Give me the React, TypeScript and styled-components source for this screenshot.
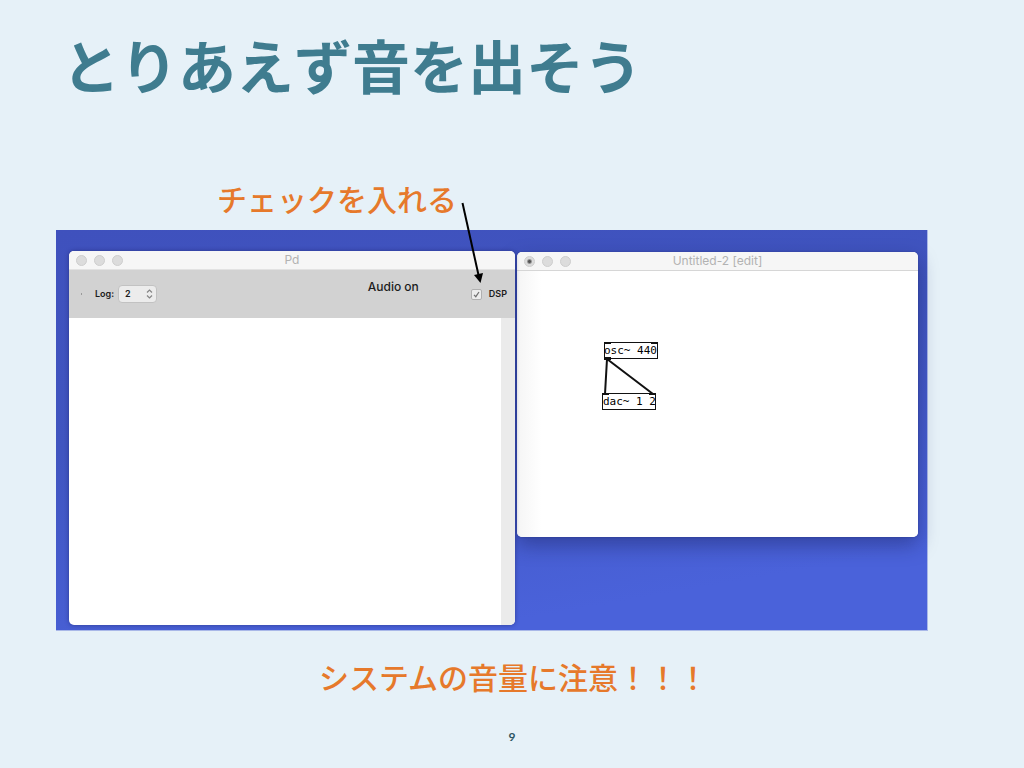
import React from "react";
import styled, { createGlobalStyle } from "styled-components";

const GlobalStyle = createGlobalStyle`
  * { box-sizing: border-box; }
  body {
    margin: 0;
    background: #e6f1f8;
    font-family: "Noto Sans CJK JP", "Noto Sans", sans-serif;
  }
`;

const Slide = styled.main`
  min-height: 100vh;
  display: flex;
  flex-direction: column;
  padding: 28px 96px 21px 56px;
`;

const Title = styled.h1`
  margin: 0 0 80px;
  padding-left: 6px;
  font-size: 58px;
  line-height: 72px;
  font-weight: 700;
  color: #3f7c8f;
`;

const Note = styled.p<{ $indent: number }>`
  margin: 0;
  padding-left: ${(p) => p.$indent}px;
  font-size: 30px;
  line-height: 36px;
  font-weight: 500;
  color: #e6792b;
`;

const Desktop = styled.section`
  margin: 14px 0 27px;
  height: 401px;
  padding: 21px 10px 5px 13px;
  display: grid;
  grid-template-columns: 446fr 401fr;
  gap: 2px;
  align-items: start;
  background: linear-gradient(170deg, #3f51bd 0%, #4055c0 40%, #4a62da 85%);
  box-shadow: inset -1px -1px 0 #a9b8e8;
`;

const Window = styled.article<{ $height: number; $front?: boolean }>`
  position: relative;
  z-index: ${(p) => (p.$front ? 1 : 0)};
  height: ${(p) => p.$height}px;
  margin-top: ${(p) => (p.$front ? 0 : 1)}px;
  display: flex;
  flex-direction: column;
  background: #fff;
  border-radius: 5px;
  box-shadow: ${(p) =>
    p.$front
      ? "0 0 4px rgba(20, 25, 90, 0.5)"
      : "0 0 2px rgba(30, 40, 110, 0.5), 0 8px 20px rgba(20, 25, 80, 0.4)"};
  font-family: Inter, sans-serif;
`;

const TitleBar = styled.header<{ $line: string }>`
  height: 19px;
  flex: none;
  display: grid;
  grid-template-columns: 60px 1fr 60px;
  align-items: center;
  background: #f6f6f6;
  border-bottom: 1px solid ${(p) => p.$line};
  border-radius: 5px 5px 0 0;
`;

const Lights = styled.div`
  display: flex;
  gap: 7px;
  padding-left: 7px;
`;

const Light = styled.button<{ $dot?: boolean }>`
  width: 11px;
  height: 11px;
  padding: 0;
  border: 1px solid #cecece;
  border-radius: 50%;
  background: ${(p) =>
    p.$dot ? "radial-gradient(circle, #555 0 1px, #dcdcdc 3px)" : "#dcdcdc"};
`;

const WindowName = styled.h2`
  margin: 0;
  text-align: center;
  font-size: 12px;
  line-height: 18px;
  font-weight: 400;
  color: #b2b2b2;
`;

const Toolbar = styled.div`
  position: relative;
  height: 48px;
  flex: none;
  display: flex;
  align-items: center;
  padding: 0 8px 0 12px;
  background: #d2d2d2;
  color: #1c1c1c;
  font-size: 9px;
  line-height: 12px;
  font-weight: 600;
`;

const Tick = styled.span`
  width: 1px;
  height: 2px;
  margin-right: 13px;
  background: #9a9a9a;
`;

const LogField = styled.label`
  display: flex;
  align-items: center;
  gap: 4px;
`;

const SelectWrap = styled.span`
  position: relative;
  display: flex;
`;

const LogSelect = styled.select`
  appearance: none;
  width: 39px;
  height: 18px;
  padding: 0 6px;
  border: 1px solid #c2c2c2;
  border-radius: 4px;
  background: #ececec;
  color: inherit;
  font: inherit;
`;

const Chevrons = styled.svg`
  position: absolute;
  right: 4px;
  top: 4px;
  pointer-events: none;
`;

const Status = styled.strong`
  margin: 0 52px 15px auto;
  font-size: 12px;
  line-height: 16px;
  font-weight: 500;
`;

const DspField = styled.label`
  display: flex;
  align-items: center;
  gap: 7px;
`;

const DspBox = styled.input`
  appearance: none;
  width: 11px;
  height: 11px;
  margin: 0;
  border: 1px solid #b0b0b0;
  border-radius: 2px;
  background: #ececec
    url("data:image/svg+xml,%3Csvg xmlns='http://www.w3.org/2000/svg' viewBox='0 0 9 9'%3E%3Cpath d='M2 4.8 3.8 6.7 7 2' fill='none' stroke='%23707070' stroke-width='1.2'/%3E%3C/svg%3E");
`;

const Arrow = styled.svg`
  position: absolute;
  right: 28px;
  bottom: 34px;
  pointer-events: none;
`;

const Log = styled.div`
  flex: 1;
  border-right: 14px solid #ebebeb;
  border-radius: 0 0 5px 5px;
`;

const Patch = styled.div`
  flex: 1;
  padding: 70px 0 0 84px;
  background: linear-gradient(90deg, #f5f5f5, #fff 24px);
  border-radius: 0 0 5px 5px;
`;

const PatchDrawing = styled.svg`
  display: block;
  font-family: "DejaVu Sans Mono", monospace;
  font-size: 11px;
`;

const PageNumber = styled.footer`
  margin: auto -40px 0 0;
  text-align: center;
  font-family: Lato, sans-serif;
  font-size: 12px;
  line-height: 20px;
  font-weight: 700;
  color: #2c5563;
`;

const WindowLights = ({ edited }: { edited?: boolean }) => (
  <Lights>
    <Light type="button" aria-label="Close" $dot={edited} />
    <Light type="button" aria-label="Minimize" />
    <Light type="button" aria-label="Zoom" />
  </Lights>
);

export default function App() {
  return (
    <>
      <GlobalStyle />
      <Slide>
        <Title>とりあえず音を出そう</Title>
        <Note $indent={161}>チェックを入れる</Note>
        <Desktop>
          <Window $height={374} $front>
            <TitleBar $line="#e2e2e2">
              <WindowLights />
              <WindowName>Pd</WindowName>
            </TitleBar>
            <Toolbar>
              <Tick />
              <LogField>
                Log:
                <SelectWrap>
                  <LogSelect defaultValue="2">
                    <option>0</option>
                    <option>1</option>
                    <option>2</option>
                    <option>3</option>
                    <option>4</option>
                  </LogSelect>
                  <Chevrons width="7" height="10" viewBox="0 0 7 10" fill="none" stroke="#858585" strokeWidth="1.2">
                    <path d="M1 3.5 3.5 1 6 3.5M1 6.5 3.5 9 6 6.5" />
                  </Chevrons>
                </SelectWrap>
              </LogField>
              <Status>Audio on</Status>
              <DspField>
                <DspBox type="checkbox" defaultChecked />
                DSP
              </DspField>
              <Arrow width="28" height="82" viewBox="0 0 28 82">
                <path d="M3.500 1 19.500 73" stroke="#000" strokeWidth="2" />
                <path d="M15 73 24 71 21.500 81Z" />
              </Arrow>
            </Toolbar>
            <Log />
          </Window>
          <Window $height={285}>
            <TitleBar $line="#d6d6d6">
              <WindowLights edited />
              <WindowName>Untitled-2 [edit]</WindowName>
            </TitleBar>
            <Patch>
              <PatchDrawing width="60" height="72" viewBox="0 0 60 72">
                <g fill="none" stroke="#111">
                  <rect x="3.500" y="1.500" width="53" height="16" />
                  <rect x="1.500" y="52.500" width="53" height="16" />
                  <path d="M6 18 4 53M6 18 52 53" strokeWidth="2" />
                </g>
                <path d="M3 1h7v2H3zM50 1h7v2h-7zM3 16h7v3H3zM1 52h7v2H1zM48 52h7v2h-7z" fill="#111" />
                <text x="3" y="13">osc~ 440</text>
                <text x="2" y="64">dac~ 1 2</text>
              </PatchDrawing>
            </Patch>
          </Window>
        </Desktop>
        <Note $indent={263}>システムの音量に注意！！！</Note>
        <PageNumber>9</PageNumber>
      </Slide>
    </>
  );
}
